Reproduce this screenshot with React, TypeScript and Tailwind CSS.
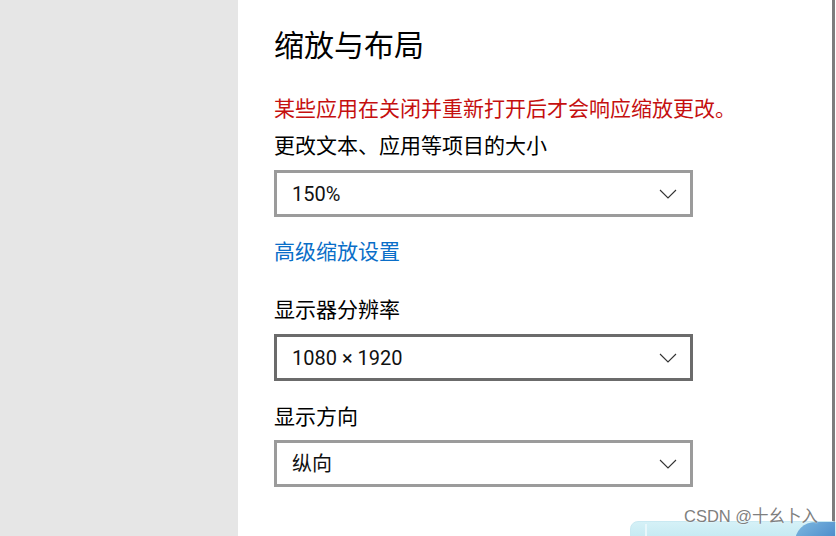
import React from "react";

const font = { fontFamily: '"Noto Sans", "Noto Sans CJK SC", sans-serif' };
const valueFont = { fontFamily: 'Roboto, "Noto Sans CJK SC", sans-serif' };

function Chevron() {
  return (
    <svg width="18" height="10" viewBox="0 0 18 10" className="shrink-0">
      <path d="M1 1 L9 9 L17 1" fill="none" stroke="#333" strokeWidth="1.1" />
    </svg>
  );
}

function Select({ value, dark }: { value: string; dark?: boolean }) {
  return (
    <div
      className={`flex h-[47px] w-[419px] items-center justify-between border-[3px] bg-white pl-[15px] pr-[13px] ${
        dark ? "border-[#6b6b6b]" : "border-[#9b9b9b]"
      }`}
    >
      <span className="text-[20px] leading-[28px] text-[#111]" style={valueFont}>
        {value}
      </span>
      <Chevron />
    </div>
  );
}

export default function App() {
  return (
    <div className="relative flex h-[536px] w-[836px] overflow-hidden bg-white" style={font}>
      <div className="h-full w-[238px] shrink-0 bg-[#e6e6e6]" />
      <div className="flex flex-1 flex-col pl-[36px] pt-[25px]">
        <div className="text-[30px] leading-[40px] text-black">缩放与布局</div>
        <div className="mt-[29px] text-[21px] leading-[28px] text-[#c50f0f]">
          某些应用在关闭并重新打开后才会响应缩放更改。
        </div>
        <div className="mt-[9px] text-[21px] leading-[28px] text-black">更改文本、应用等项目的大小</div>
        <div className="mt-[11px]">
          <Select value="150%" />
        </div>
        <div className="mt-[20px] text-[21px] leading-[28px] text-[#0a6ec8]">高级缩放设置</div>
        <div className="mt-[30px] text-[21px] leading-[28px] text-black">显示器分辨率</div>
        <div className="mt-[11px]">
          <Select value="1080 × 1920" dark />
        </div>
        <div className="mt-[21px] text-[21px] leading-[28px] text-black">显示方向</div>
        <div className="mt-[10px]">
          <Select value="纵向" />
        </div>
      </div>
      <div className="mr-[1px] h-full w-[3px] shrink-0 self-stretch bg-[#7d7d7d]" />
      <div className="absolute left-[630px] top-[521px] h-[30px] w-[210px] rounded-[8px] border border-[#c9e9f2] bg-gradient-to-b from-[#d5f1f7] to-[#b9e4ef]" />
      <div className="absolute left-[645px] top-[524px] h-[20px] w-[2px] bg-[#e8f7fb]" />
      <div className="absolute left-[795px] top-[522px] h-[30px] w-[40px] rounded-tl-[20px] bg-gradient-to-br from-[#7fb9e0] to-[#3c7fc4]" />
      <div
        className="absolute left-[684px] top-[504px] text-[16.5px] leading-[24px] text-[#7f7f7f]"
        style={{ textShadow: "0 0 2px #fff", fontFamily: '"Liberation Sans", "Noto Sans CJK SC", sans-serif' }}
      >
        CSDN @十幺卜入
      </div>
    </div>
  );
}
